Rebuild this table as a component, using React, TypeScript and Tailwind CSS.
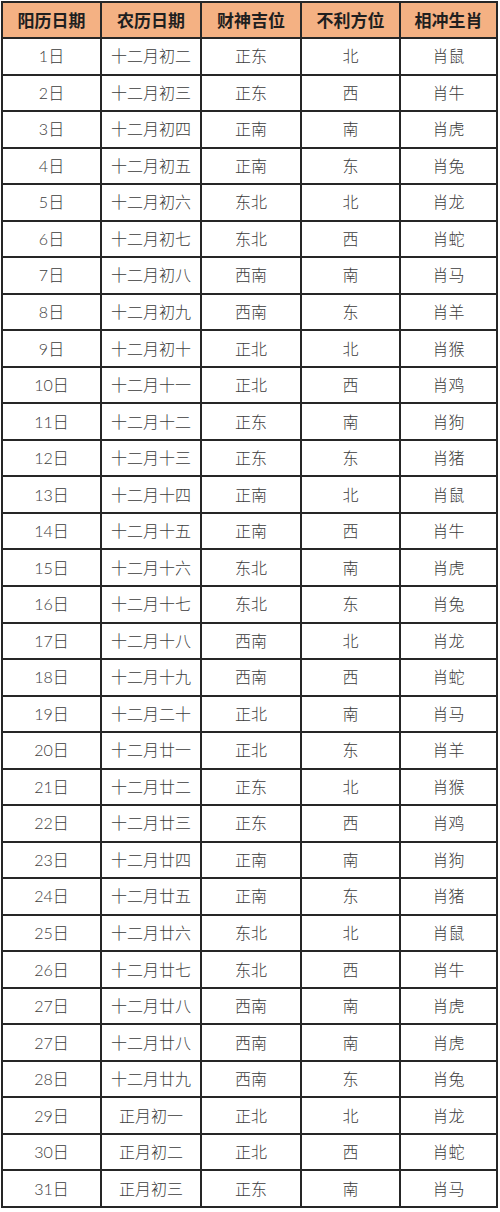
import React from "react";

const rows: [string, string, string, string, string][] = [
  ["1日", "十二月初二", "正东", "北", "肖鼠"],
  ["2日", "十二月初三", "正东", "西", "肖牛"],
  ["3日", "十二月初四", "正南", "南", "肖虎"],
  ["4日", "十二月初五", "正南", "东", "肖兔"],
  ["5日", "十二月初六", "东北", "北", "肖龙"],
  ["6日", "十二月初七", "东北", "西", "肖蛇"],
  ["7日", "十二月初八", "西南", "南", "肖马"],
  ["8日", "十二月初九", "西南", "东", "肖羊"],
  ["9日", "十二月初十", "正北", "北", "肖猴"],
  ["10日", "十二月十一", "正北", "西", "肖鸡"],
  ["11日", "十二月十二", "正东", "南", "肖狗"],
  ["12日", "十二月十三", "正东", "东", "肖猪"],
  ["13日", "十二月十四", "正南", "北", "肖鼠"],
  ["14日", "十二月十五", "正南", "西", "肖牛"],
  ["15日", "十二月十六", "东北", "南", "肖虎"],
  ["16日", "十二月十七", "东北", "东", "肖兔"],
  ["17日", "十二月十八", "西南", "北", "肖龙"],
  ["18日", "十二月十九", "西南", "西", "肖蛇"],
  ["19日", "十二月二十", "正北", "南", "肖马"],
  ["20日", "十二月廿一", "正北", "东", "肖羊"],
  ["21日", "十二月廿二", "正东", "北", "肖猴"],
  ["22日", "十二月廿三", "正东", "西", "肖鸡"],
  ["23日", "十二月廿四", "正南", "南", "肖狗"],
  ["24日", "十二月廿五", "正南", "东", "肖猪"],
  ["25日", "十二月廿六", "东北", "北", "肖鼠"],
  ["26日", "十二月廿七", "东北", "西", "肖牛"],
  ["27日", "十二月廿八", "西南", "南", "肖虎"],
  ["27日", "十二月廿八", "西南", "南", "肖虎"],
  ["28日", "十二月廿九", "西南", "东", "肖兔"],
  ["29日", "正月初一", "正北", "北", "肖龙"],
  ["30日", "正月初二", "正北", "西", "肖蛇"],
  ["31日", "正月初三", "正东", "南", "肖马"],
];

const headers = ["阳历日期", "农历日期", "财神吉位", "不利方位", "相冲生肖"];

export default function App() {
  return (
    <div className="w-[500px] h-[1212px] bg-white pl-px pt-px">
      <div
        className="grid w-[497px] h-[1207px] bg-[#262626] p-[2px] gap-[2px] grid-cols-[97px_98px_98px_97px_95px] grid-rows-[34px_repeat(32,1fr)]"
        style={{ fontFamily: "Lato, 'Noto Sans CJK SC', sans-serif" }}
      >
        {headers.map((h) => (
          <div
            key={h}
            className="bg-[#f4b183] flex items-center justify-center text-[17px] font-bold text-[#1f1f1f]"
            style={{ fontFamily: "'Noto Sans CJK SC', sans-serif" }}
          >
            {h}
          </div>
        ))}
        {rows.map((r, i) =>
          r.map((c, j) => (
            <div
              key={`${i}-${j}`}
              className="bg-white flex items-center justify-center text-[16px] text-[#3c3c3c] font-light"
            >
              {c}
            </div>
          ))
        )}
      </div>
    </div>
  );
}
